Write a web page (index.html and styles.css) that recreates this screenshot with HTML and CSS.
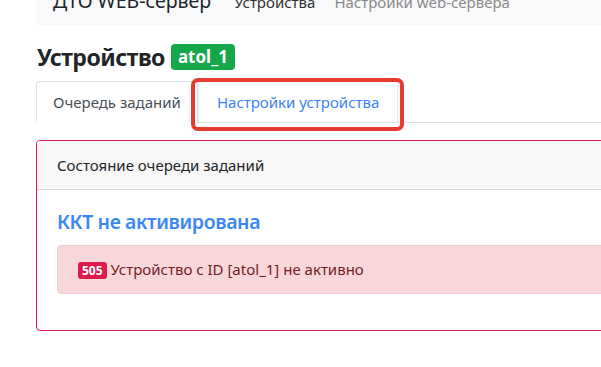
FILE: index.html
```html
<!DOCTYPE html>
<html lang="ru">
<head>
    <meta charset="UTF-8">
    <meta name="viewport" content="width=device-width, initial-scale=1.0">
    <title>ДТО WEB-сервер</title>
    <link rel="stylesheet" href="styles.css">
</head>
<body>
    <div class="container">
        <nav class="navbar">
            <span class="brand">ДТО WEB-сервер</span>
            <a class="nav-link active" href="#">Устройства</a>
            <a class="nav-link" href="#">Настройки web-сервера</a>
        </nav>

        <h3 class="page-title">Устройство <span class="badge-id">atol_1</span></h3>

        <ul class="tabs">
            <li class="tab active">Очередь заданий</li>
            <li class="tab highlighted"><a href="#">Настройки устройства</a></li>
        </ul>

        <!-- job queue state -->
        <div class="card">
            <div class="card-header">Состояние очереди заданий</div>
            <div class="card-body">
                <h4 class="status-title">ККТ не активирована</h4>
                <div class="alert">
                    <span class="badge-code">505</span> Устройство с ID [atol_1] не активно
                </div>
            </div>
        </div>
    </div>
</body>
</html>
```

FILE: styles.css
```css
body {
    margin: 0;
    padding: 0;
    font-family: 'Noto Sans', 'Open Sans', sans-serif;
    font-size: 15px;
    color: #212529;
    background-color: #fff;
    overflow: hidden;
}
.container {
    width: 760px;
    padding-left: 36px;
}
.navbar {
    display: flex;
    align-items: baseline;
    height: 56px;
    margin-top: -31px;
    padding: 0 17px;
    background-color: #f8f9fa;
    box-sizing: border-box;
    padding-top: 18px;
}
.brand {
    font-size: 19.5px;
    margin-right: 23px;
}
.nav-link {
    color: #8a8a8a;
    text-decoration: none;
    margin-right: 19px;
}
.nav-link.active {
    color: #333;
}
.page-title {
    display: flex;
    align-items: center;
    margin: 18px 0 10px 1px;
    font-size: 23px;
    font-weight: 700;
    letter-spacing: -0.5px;
    line-height: 28px;
    color: #212529;
}
.badge-id {
    display: inline-block;
    margin-left: 6px;
    padding: 0 7px;
    height: 26px;
    line-height: 26px;
    border-radius: 4px;
    background-color: #14a84a;
    color: #fff;
    font-size: 17px;
    font-weight: 700;
    letter-spacing: 0;
}
.tabs {
    display: flex;
    list-style: none;
    margin: 0;
    padding: 0;
    border-bottom: 1px solid #dee2e6;
}
.tab {
    position: relative;
    padding: 8px 16px;
    line-height: 24px;
    margin-bottom: -1px;
    border: 1px solid transparent;
    border-radius: 4px 4px 0 0;
}
.tab.active {
    border-color: #dee2e6 #dee2e6 #fff;
    background-color: #fff;
    color: #495057;
}
.tab.highlighted {
    border-color: #e9ecef #e9ecef #dee2e6;
    padding: 8px 18px;
}
.tab.highlighted::after {
    content: '';
    position: absolute;
    top: -4px;
    left: -8px;
    right: -7px;
    bottom: -9px;
    border: 4px solid #e53b30;
    border-radius: 7px;
}
.tab a {
    color: #3b82f6;
    text-decoration: none;
}
.card {
    margin-top: 17px;
    border: 1px solid #d81e4f;
    border-radius: 4px;
}
.card-header {
    padding: 12px 20px;
    line-height: 24px;
    background-color: #f7f7f7;
    border-bottom: 1px solid #dcdcdc;
    border-radius: 3px 3px 0 0;
}
.card-body {
    padding: 20px 20px 20px;
}
.status-title {
    margin: 0 0 11px;
    font-size: 19.5px;
    font-weight: 600;
    letter-spacing: -0.4px;
    line-height: 24px;
    color: #3b86f5;
}
.alert {
    margin-bottom: 16px;
    padding: 12px 20px;
    line-height: 23px;
    background-color: #f8d7da;
    border: 1px solid #f5c6cb;
    border-radius: 4px;
    color: #721c24;
}
.badge-code {
    display: inline-block;
    padding: 0 4px;
    line-height: 17px;
    border-radius: 3px;
    background-color: #dc1a4b;
    color: #fff;
    font-size: 12px;
    font-weight: 700;
}
```
